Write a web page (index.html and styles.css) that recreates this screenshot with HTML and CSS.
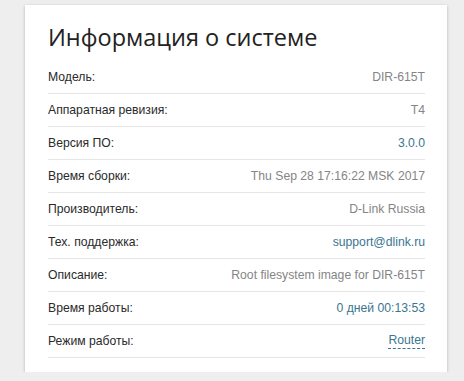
FILE: index.html
```html
<!DOCTYPE html>
<html lang="ru">
<head>
<meta charset="utf-8">
<link rel="stylesheet" href="styles.css">
</head>
<body>
<div class="card">
  <h1 class="title">Информация о системе</h1>
  <div class="rows">
    <div class="row"><span class="label">Модель:</span><span class="value">DIR-615T</span></div>
    <div class="row"><span class="label">Аппаратная ревизия:</span><span class="value">T4</span></div>
    <div class="row"><span class="label">Версия ПО:</span><span class="value link">3.0.0</span></div>
    <div class="row"><span class="label">Время сборки:</span><span class="value">Thu Sep 28 17:16:22 MSK 2017</span></div>
    <div class="row"><span class="label">Производитель:</span><span class="value">D-Link Russia</span></div>
    <div class="row"><span class="label">Тех. поддержка:</span><span class="value link">support@dlink.ru</span></div>
    <div class="row"><span class="label">Описание:</span><span class="value">Root filesystem image for DIR-615T</span></div>
    <div class="row"><span class="label">Время работы:</span><span class="value link">0 дней 00:13:53</span></div>
    <div class="row"><span class="label">Режим работы:</span><span class="value link dashed">Router</span></div>
  </div>
</div>
</body>
</html>
```
FILE: styles.css
```css
html, body {
  margin: 0;
  padding: 0;
  background: #eeeeee;
}
body {
  padding: 5px 0 0 25px;
  font-family: "Liberation Sans", Arial, sans-serif;
}
.card {
  width: 422px;
  height: 367px;
  box-sizing: border-box;
  background: #ffffff;
  box-shadow: 0 1px 3px rgba(0,0,0,0.25);
  padding: 0 22px 0 23px;
}
.title {
  margin: 0;
  padding-top: 14px;
  height: 42px;
  font-family: "Open Sans", sans-serif;
  font-weight: 400;
  font-size: 23.5px;
  line-height: 36px;
  color: #222222;
}
.rows {
  display: flex;
  flex-direction: column;
}
.row {
  display: flex;
  justify-content: space-between;
  align-items: center;
  height: 32px;
  border-bottom: 1px solid #e6e6e6;
  font-size: 12.2px;
}
.label {
  color: #2a2a2a;
}
.value {
  color: #858585;
}
.link {
  color: #3a7690;
}
.dashed {
  border-bottom: 1px dashed #3a7690;
  line-height: 15px;
}
```
